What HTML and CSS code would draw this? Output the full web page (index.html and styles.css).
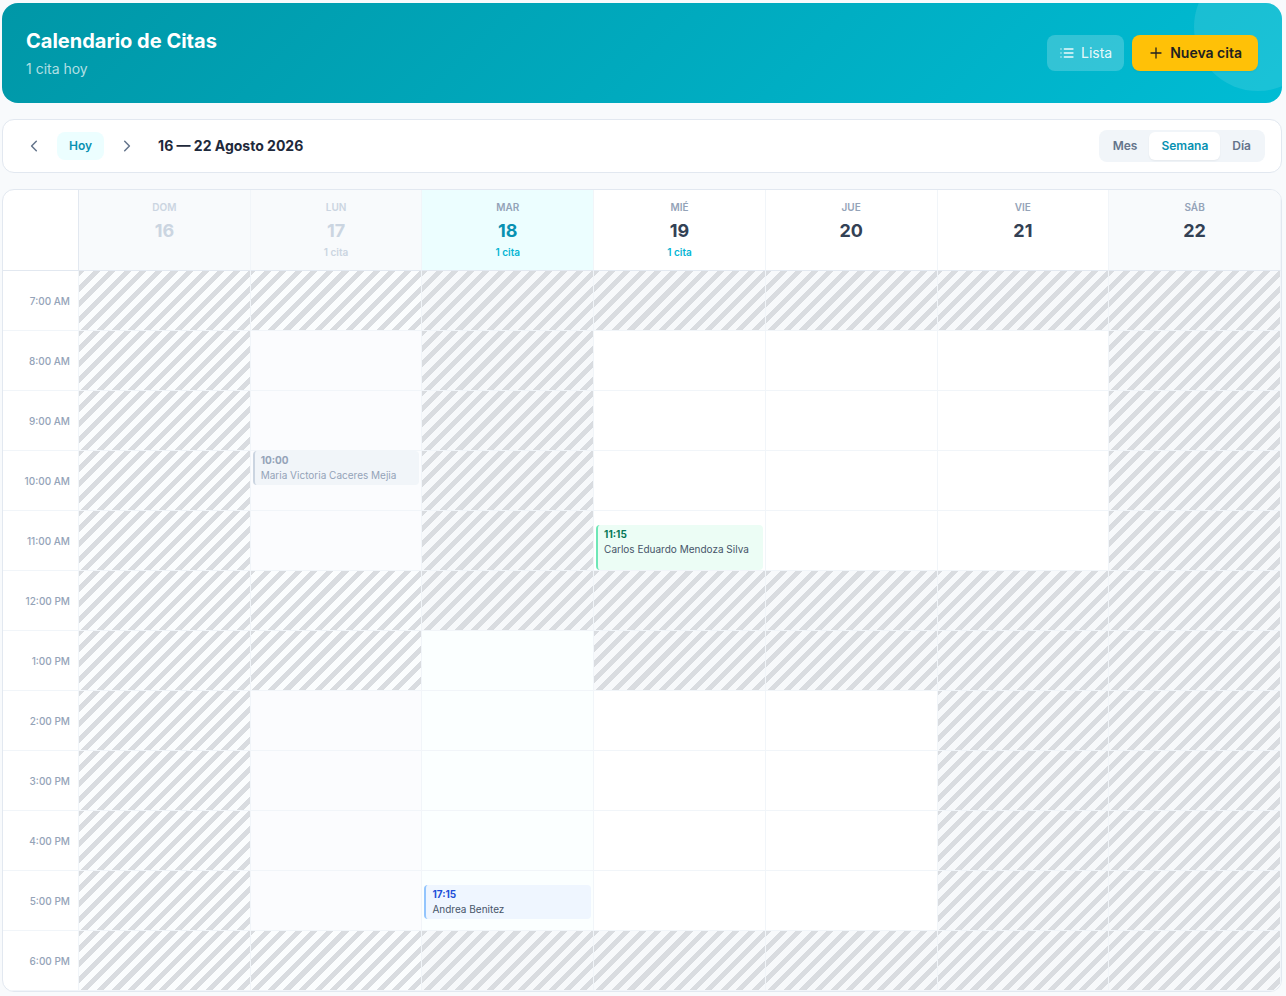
FILE: index.html
```html
<!DOCTYPE html>
<html lang="es">
<head>
<meta charset="utf-8">
<meta name="viewport" content="width=device-width, initial-scale=1">
<title>Calendario de Citas</title>
<link rel="stylesheet" href="styles.css">
</head>
<body>

<header class="hero">
	<div>
		<h1>Calendario de Citas</h1>
		<p>1 cita hoy</p>
	</div>
	<div class="hero-actions">
		<a class="btn btn-list" href="#lista">
			<svg width="16" height="16" viewBox="0 0 16 16" fill="none" stroke="currentColor" stroke-width="1.3" stroke-linecap="round"><path d="M5.3 4H14M5.3 8H14M5.3 12H14M2 4h.01M2 8h.01M2 12h.01"/></svg>
			Lista
		</a>
		<button class="btn btn-new" type="button">
			<svg width="16" height="16" viewBox="0 0 16 16" fill="none" stroke="currentColor" stroke-width="1.3" stroke-linecap="round"><path d="M3 8h10M8 3v10"/></svg>
			Nueva cita
		</button>
	</div>
</header>

<nav class="toolbar">
	<div class="period">
		<button class="arrow" type="button" aria-label="Anterior"><svg width="16" height="16" viewBox="0 0 16 16" fill="none" stroke="currentColor" stroke-width="1.5" stroke-linecap="round" stroke-linejoin="round"><path d="M10.3 3.3L5.6 8l4.7 4.7"/></svg></button>
		<button class="today" type="button">Hoy</button>
		<button class="arrow" type="button" aria-label="Siguiente"><svg width="16" height="16" viewBox="0 0 16 16" fill="none" stroke="currentColor" stroke-width="1.5" stroke-linecap="round" stroke-linejoin="round"><path d="M5.7 3.3L10.4 8l-4.7 4.7"/></svg></button>
		<h2>16 — 22 Agosto 2026</h2>
	</div>
	<div class="views">
		<button type="button">Mes</button>
		<button class="active" type="button">Semana</button>
		<button type="button">Día</button>
	</div>
</nav>

<main class="calendar">
	<table class="week">
		<colgroup><col class="hours"><col><col><col><col><col><col><col></colgroup>
		<thead>
			<tr>
				<td></td>
				<th class="past"><span>DOM</span><b>16</b></th>
				<th class="past"><span>LUN</span><b>17</b><i>1 cita</i></th>
				<th class="now"><span>MAR</span><b>18</b><i>1 cita</i></th>
				<th><span>MIÉ</span><b>19</b><i>1 cita</i></th>
				<th><span>JUE</span><b>20</b></th>
				<th><span>VIE</span><b>21</b></th>
				<th class="weekend"><span>SÁB</span><b>22</b></th>
			</tr>
		</thead>
		<tbody>
			<tr><th>7:00 AM</th><td class="past off"></td><td class="past off"></td><td class="off"></td><td class="off"></td><td class="off"></td><td class="off"></td><td class="off"></td></tr>
			<tr><th>8:00 AM</th><td class="past off"></td><td class="past"></td><td class="off"></td><td></td><td></td><td></td><td class="off"></td></tr>
			<tr><th>9:00 AM</th><td class="past off"></td><td class="past"></td><td class="off"></td><td></td><td></td><td></td><td class="off"></td></tr>
			<tr><th>10:00 AM</th><td class="past off"></td><td class="past"><a class="event gray at-00" href="#cita-1"><b>10:00</b><span>Maria Victoria Caceres Mejia</span></a></td><td class="off"></td><td></td><td></td><td></td><td class="off"></td></tr>
			<tr><th>11:00 AM</th><td class="past off"></td><td class="past"></td><td class="off"></td><td><a class="event green at-15 long" href="#cita-2"><b>11:15</b><span>Carlos Eduardo Mendoza Silva</span></a></td><td></td><td></td><td class="off"></td></tr>
			<tr><th>12:00 PM</th><td class="past off"></td><td class="past off"></td><td class="off"></td><td class="off"></td><td class="off"></td><td class="off"></td><td class="off"></td></tr>
			<tr><th>1:00 PM</th><td class="past off"></td><td class="past off"></td><td class="now"></td><td class="off"></td><td class="off"></td><td class="off"></td><td class="off"></td></tr>
			<tr><th>2:00 PM</th><td class="past off"></td><td class="past"></td><td class="now"></td><td></td><td></td><td class="off"></td><td class="off"></td></tr>
			<tr><th>3:00 PM</th><td class="past off"></td><td class="past"></td><td class="now"></td><td></td><td></td><td class="off"></td><td class="off"></td></tr>
			<tr><th>4:00 PM</th><td class="past off"></td><td class="past"></td><td class="now"></td><td></td><td></td><td class="off"></td><td class="off"></td></tr>
			<tr><th>5:00 PM</th><td class="past off"></td><td class="past"></td><td class="now"><a class="event blue at-15" href="#cita-3"><b>17:15</b><span>Andrea Benitez</span></a></td><td></td><td></td><td class="off"></td><td class="off"></td></tr>
			<tr><th>6:00 PM</th><td class="past off"></td><td class="past off"></td><td class="off"></td><td class="off"></td><td class="off"></td><td class="off"></td><td class="off"></td></tr>
		</tbody>
	</table>
</main>

</body>
</html>
```

FILE: styles.css
```css
* {
	box-sizing: border-box;
}

body {
	margin: 0;
	padding: 3px 4px 4px 2px;
	background: #f8fafc;
	color: #1e293b;
	font-family: Inter, "Liberation Sans", sans-serif;
	font-size: 14px;
	line-height: 20px;
	display: flex;
	flex-direction: column;
	gap: 16px;
}

h1, h2, p {
	margin: 0;
}

button, a {
	font-family: inherit;
	border: 0;
	cursor: pointer;
	text-decoration: none;
}

.hero {
	position: relative;
	overflow: hidden;
	display: flex;
	align-items: center;
	justify-content: space-between;
	padding: 24px;
	border-radius: 16px;
	color: #fff;
	background: linear-gradient(135deg, #0097a7, #00bcd4);
}

/* decorative circle in the corner */
.hero::after {
	content: "";
	position: absolute;
	top: -40px;
	right: -40px;
	width: 128px;
	height: 128px;
	border-radius: 50%;
	background: rgba(255, 255, 255, 0.1);
}

.hero h1 {
	font-size: 20px;
	line-height: 28px;
	font-weight: 700;
}

.hero p {
	margin-top: 4px;
	color: rgba(255, 255, 255, 0.7);
}

.hero-actions {
	position: relative;
	z-index: 1;
	display: flex;
	gap: 8px;
}

.btn {
	display: flex;
	align-items: center;
	height: 36px;
	border-radius: 8px;
	font-size: 14px;
	line-height: 20px;
}

.btn-list {
	gap: 6px;
	padding: 0 12px;
	color: rgba(255, 255, 255, 0.9);
	background: rgba(255, 255, 255, 0.2);
}

.btn-new {
	gap: 6px;
	padding: 0 16px;
	color: #212121;
	font-weight: 600;
	background: #ffc107;
	box-shadow: 0 1px 2px rgba(0, 0, 0, 0.05);
}

.toolbar {
	display: flex;
	align-items: center;
	justify-content: space-between;
	height: 54px;
	padding: 0 16px;
	background: #fff;
	border: 1px solid #e2e8f0;
	border-radius: 12px;
}

.period {
	display: flex;
	align-items: center;
	gap: 8px;
}

.period h2 {
	margin-left: 8px;
	font-size: 14px;
	font-weight: 700;
}

.arrow {
	display: flex;
	padding: 7px;
	background: none;
	color: #64748b;
}

.today {
	padding: 6px 12px;
	border-radius: 8px;
	background: #ecfeff;
	color: #0891b2;
	font-size: 12px;
	line-height: 16px;
	font-weight: 600;
}

.views {
	display: flex;
	padding: 2px;
	border-radius: 8px;
	background: #f1f5f9;
}

.views button {
	padding: 6px 12px;
	border-radius: 6px;
	background: none;
	color: #64748b;
	font-size: 12px;
	line-height: 16px;
	font-weight: 600;
}

.views .active {
	background: #fff;
	color: #0891b2;
	box-shadow: 0 1px 2px rgba(0, 0, 0, 0.05);
}

.calendar {
	overflow: hidden;
	background: #fff;
	border: 1px solid #e2e8f0;
	border-radius: 12px;
}

.week {
	width: 100%;
	table-layout: fixed;
	border-collapse: separate;
	border-spacing: 0;
}

.hours {
	width: 76px;
}

.week td, .week th {
	padding: 0;
	border-right: 1px solid #f1f5f9;
	border-bottom: 1px solid #f1f5f9;
}

.week thead td, .week thead th {
	height: 81px;
	border-bottom-color: #e2e8f0;
}

.week thead td {
	border-right-color: #e2e8f0;
}

.week thead th {
	padding-top: 9px;
	vertical-align: top;
}

thead span, thead b, thead i {
	display: block;
	font-style: normal;
}

thead span {
	color: #94a3b8;
	font-size: 10px;
	line-height: 16px;
	font-weight: 600;
}

thead b {
	margin-top: 2px;
	color: #334155;
	font-size: 18px;
	line-height: 28px;
	font-weight: 700;
}

thead i {
	color: #06b6d4;
	font-size: 10px;
	line-height: 15px;
	font-weight: 600;
}

thead .past, thead .weekend {
	background: #f8fafc;
}

thead .past span, thead .past b, thead .past i {
	color: #cbd5e1;
}

thead .now {
	background: #ecfeff;
}

thead .now b {
	color: #0891b2;
}

.week tbody td, .week tbody th {
	position: relative;
	height: 60px;
}

.week tbody th {
	padding-right: 8px;
	color: #94a3b8;
	font-size: 10px;
	line-height: 16px;
	font-weight: 500;
	text-align: right;
}

tbody .past {
	background-color: #fbfcfe;
}

tbody .now {
	background-color: #fbffff;
}

/* hours outside of the schedule */
tbody .off {
	background-color: #f7f9fb;
	background-image: repeating-linear-gradient(-45deg, transparent, transparent 6px, #d9dce0 6px, #d9dce0 11px);
	background-origin: border-box;
}

tbody .past.off {
	background-color: #fbfdfe;
}

.event {
	position: absolute;
	z-index: 1;
	left: 2px;
	right: 2px;
	height: 34px;
	padding: 2px 6px;
	overflow: hidden;
	border-left: 2px solid;
	border-radius: 4px;
	font-size: 10px;
	line-height: 15px;
	white-space: nowrap;
}

.event b, .event span {
	display: block;
}

.event span {
	color: #475569;
}

.at-00 {
	top: 0;
}

.at-15 {
	top: 14px;
}

.long {
	height: 45px;
}

.gray, .event.gray span {
	color: #94a3b8;
}

.gray {
	background: #f1f5f9;
	border-color: #cbd5e1;
}

.green {
	background: #ecfdf5;
	border-color: #6ee7b7;
	color: #047857;
}

.blue {
	background: #eff6ff;
	border-color: #93c5fd;
	color: #1d4ed8;
}
```
